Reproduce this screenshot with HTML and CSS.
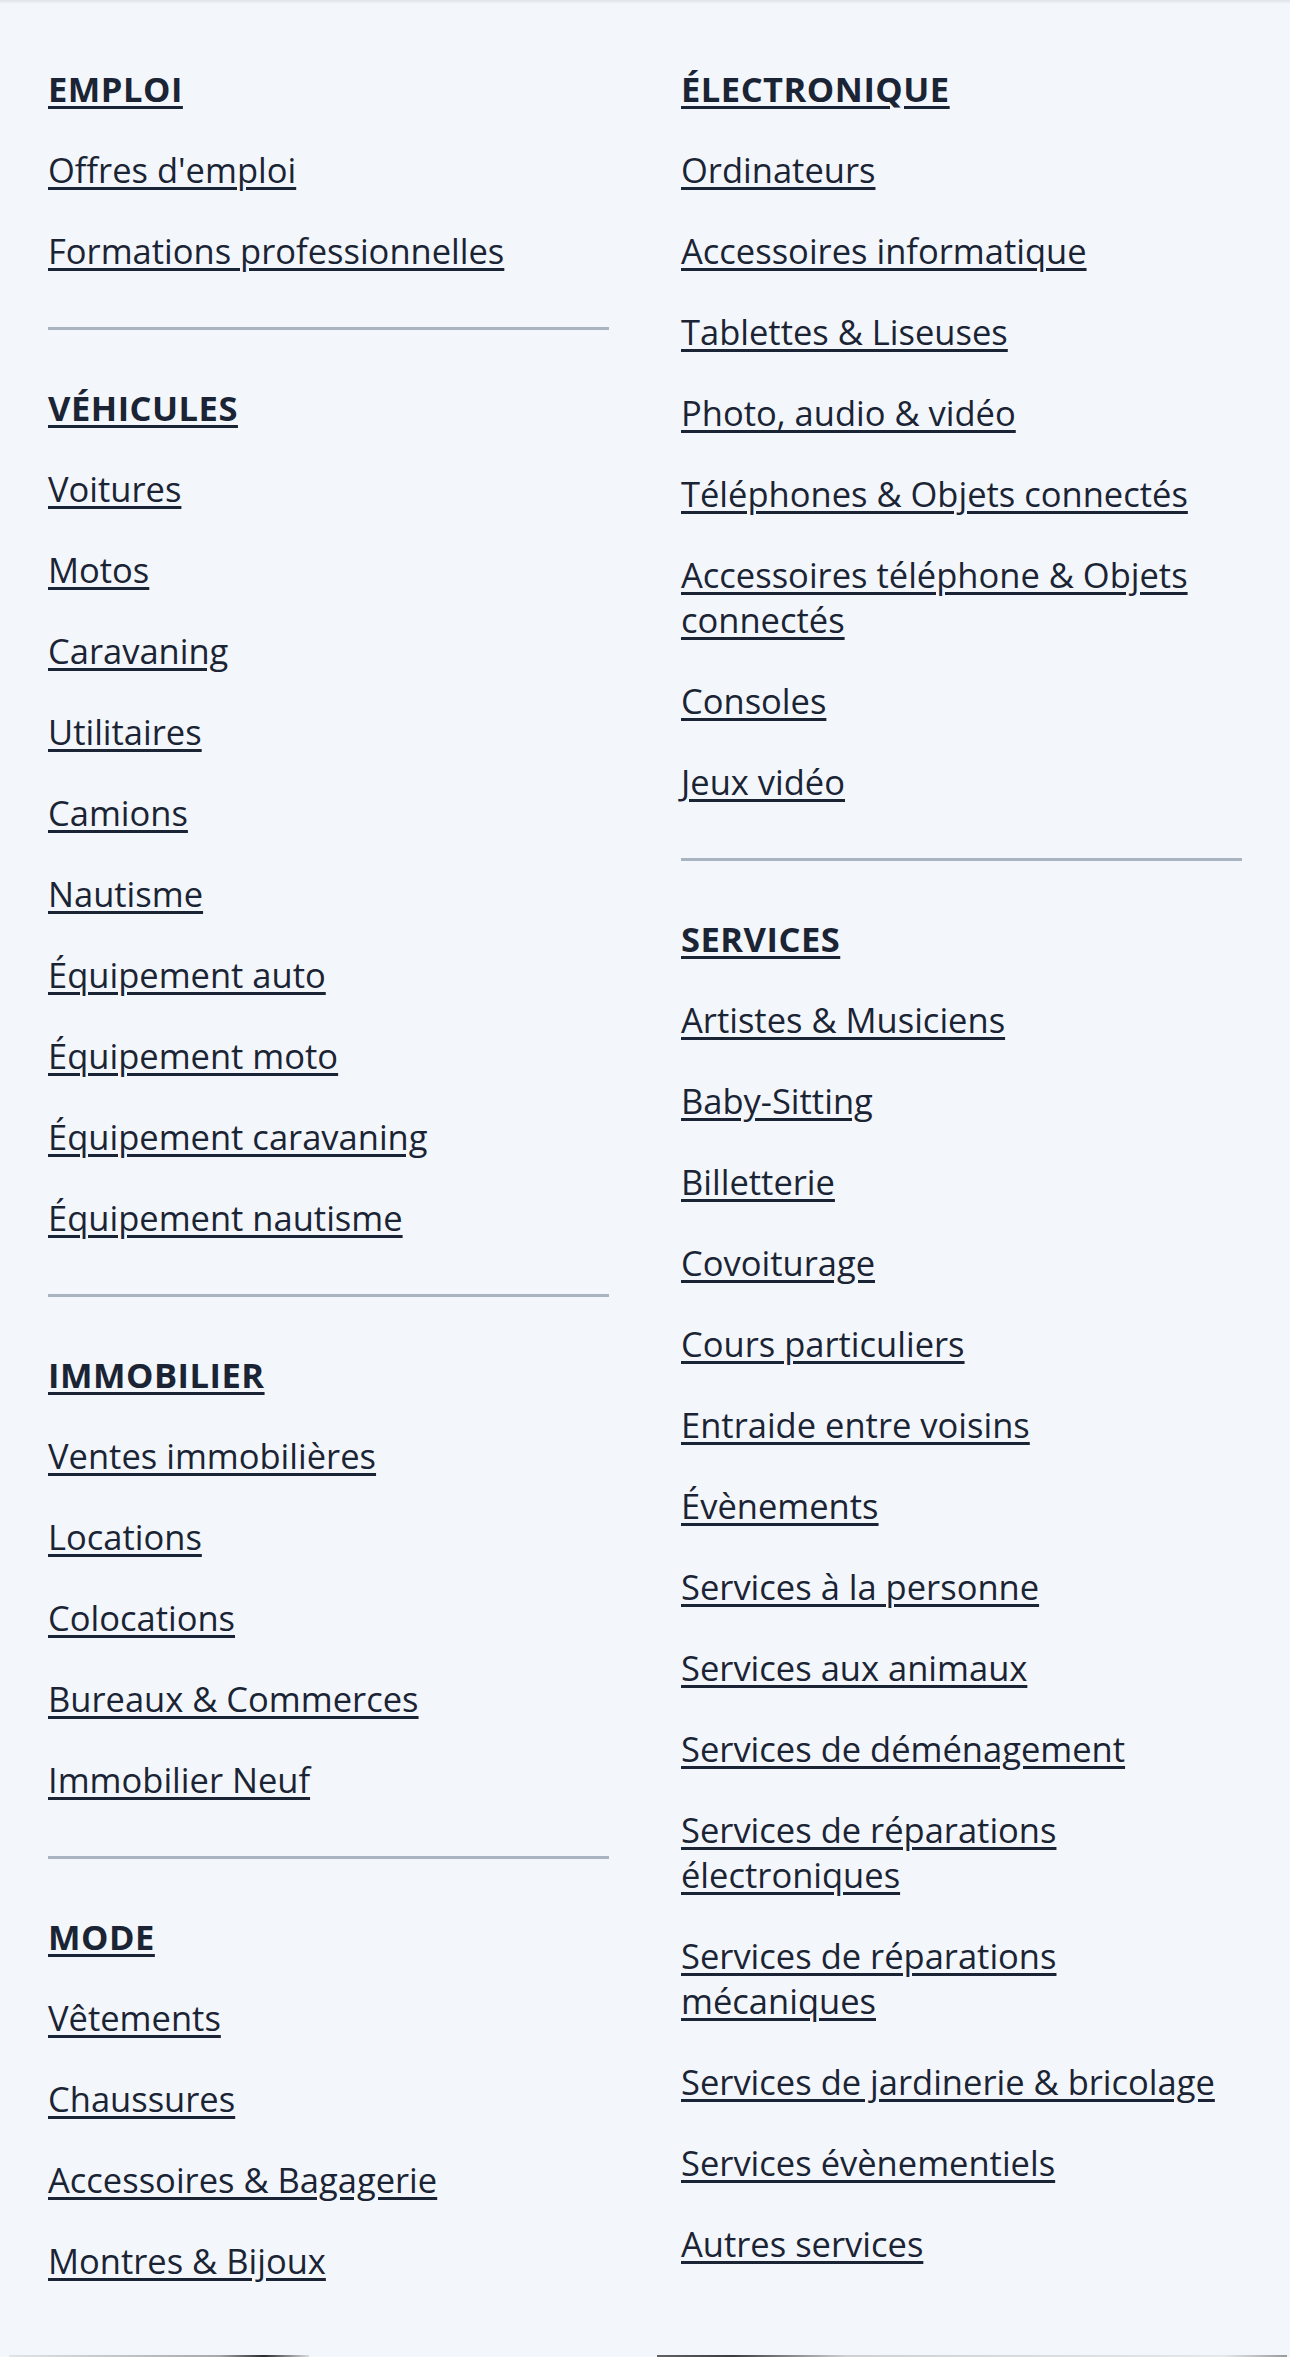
FILE: index.html
```html
<!DOCTYPE html>
<html lang="fr">
<head>
<meta charset="utf-8">
<title>Catégories</title>
<link rel="stylesheet" href="styles.css">
</head>
<body>
<div class="page">
  <div class="top-shadow"></div>
  <main class="grid">
    <div class="col">
      <section class="group">
        <a class="heading" href="#">EMPLOI</a>
        <ul class="links">
          <li><a href="#">Offres d'emploi</a></li>
          <li><a href="#">Formations professionnelles</a></li>
        </ul>
      </section>
      <hr class="sep">
      <section class="group">
        <a class="heading" href="#">VÉHICULES</a>
        <ul class="links">
          <li><a href="#">Voitures</a></li>
          <li><a href="#">Motos</a></li>
          <li><a href="#">Caravaning</a></li>
          <li><a href="#">Utilitaires</a></li>
          <li><a href="#">Camions</a></li>
          <li><a href="#">Nautisme</a></li>
          <li><a href="#">Équipement auto</a></li>
          <li><a href="#">Équipement moto</a></li>
          <li><a href="#">Équipement caravaning</a></li>
          <li><a href="#">Équipement nautisme</a></li>
        </ul>
      </section>
      <hr class="sep">
      <section class="group">
        <a class="heading" href="#">IMMOBILIER</a>
        <ul class="links">
          <li><a href="#">Ventes immobilières</a></li>
          <li><a href="#">Locations</a></li>
          <li><a href="#">Colocations</a></li>
          <li><a href="#">Bureaux &amp; Commerces</a></li>
          <li><a href="#">Immobilier Neuf</a></li>
        </ul>
      </section>
      <hr class="sep">
      <section class="group">
        <a class="heading" href="#">MODE</a>
        <ul class="links">
          <li><a href="#">Vêtements</a></li>
          <li><a href="#">Chaussures</a></li>
          <li><a href="#">Accessoires &amp; Bagagerie</a></li>
          <li><a href="#">Montres &amp; Bijoux</a></li>
        </ul>
      </section>
    </div>
    <div class="col">
      <section class="group">
        <a class="heading" href="#">ÉLECTRONIQUE</a>
        <ul class="links">
          <li><a href="#">Ordinateurs</a></li>
          <li><a href="#">Accessoires informatique</a></li>
          <li><a href="#">Tablettes &amp; Liseuses</a></li>
          <li><a href="#">Photo, audio &amp; vidéo</a></li>
          <li><a href="#">Téléphones &amp; Objets connectés</a></li>
          <li><a href="#">Accessoires téléphone &amp; Objets connectés</a></li>
          <li><a href="#">Consoles</a></li>
          <li><a href="#">Jeux vidéo</a></li>
        </ul>
      </section>
      <hr class="sep">
      <section class="group">
        <a class="heading" href="#">SERVICES</a>
        <ul class="links">
          <li><a href="#">Artistes &amp; Musiciens</a></li>
          <li><a href="#">Baby-Sitting</a></li>
          <li><a href="#">Billetterie</a></li>
          <li><a href="#">Covoiturage</a></li>
          <li><a href="#">Cours particuliers</a></li>
          <li><a href="#">Entraide entre voisins</a></li>
          <li><a href="#">Évènements</a></li>
          <li><a href="#">Services à la personne</a></li>
          <li><a href="#">Services aux animaux</a></li>
          <li><a href="#">Services de déménagement</a></li>
          <li><a href="#">Services de réparations électroniques</a></li>
          <li><a href="#">Services de réparations mécaniques</a></li>
          <li><a href="#">Services de jardinerie &amp; bricolage</a></li>
          <li><a href="#">Services évènementiels</a></li>
          <li><a href="#">Autres services</a></li>
        </ul>
      </section>
    </div>
  </main>
  <div class="bottom-edge">
    <span class="edge edge-left"></span>
    <span class="edge edge-right"></span>
  </div>
</div>
</body>
</html>
```

FILE: styles.css
```css
* { box-sizing: border-box; }

html, body {
  margin: 0;
  padding: 0;
  background: #f3f7fb;
}

body {
  font-family: "Open Sans", "Noto Sans", "Liberation Sans", sans-serif;
  color: #1b2434;
}

.page {
  min-height: 2357px;
  display: flex;
  flex-direction: column;
}

.top-shadow {
  height: 4px;
  background: linear-gradient(to bottom, #dfe3e8 0%, #eaeef3 50%, #f3f7fb 100%);
}

.grid {
  display: grid;
  grid-template-columns: 1fr 1fr;
  column-gap: 72px;
  padding: 62px 48px 0;
}

.col {
  display: flex;
  flex-direction: column;
  min-width: 0;
}

.group {
  display: flex;
  flex-direction: column;
  align-items: flex-start;
  gap: 36px;
}

.heading,
.links a {
  color: #1b2434;
  font-size: 34.5px;
  line-height: 45px;
  text-decoration: underline;
  text-decoration-thickness: 3px;
  text-underline-offset: 4px;
}

.heading {
  font-weight: 700;
  letter-spacing: 0.5px;
}

.links {
  list-style: none;
  margin: 0;
  padding: 0;
  display: flex;
  flex-direction: column;
  gap: 36px;
  line-height: 45px;
  font-size: 34.5px;
}

.sep {
  border: 0;
  height: 3px;
  background: #aab3c0;
  margin: 54px 0 55px;
  width: 100%;
}

.bottom-edge {
  margin-top: auto;
  height: 2px;
  display: flex;
}

.edge {
  height: 2px;
  display: block;
}

.edge-left {
  margin-left: 9px;
  width: 300px;
  background: linear-gradient(to right, rgba(120,120,120,0.15), rgba(90,90,90,0.5) 70%, rgba(20,20,20,0.9) 85%, rgba(120,120,120,0.2));
}

.edge-right {
  margin-left: 348px;
  width: 630px;
  background: linear-gradient(to right, rgba(60,60,60,0.8), rgba(40,40,40,0.9) 12%, rgba(150,150,150,0.4) 30%, rgba(170,170,170,0.2) 90%, rgba(90,90,90,0.6));
}
```
